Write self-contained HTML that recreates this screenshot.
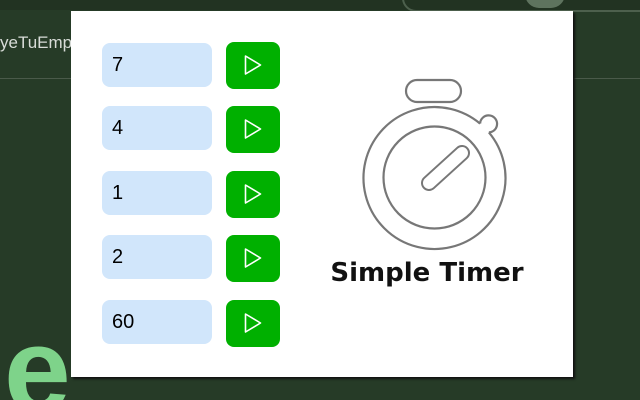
<!DOCTYPE html>
<html style="width:640px;height:400px;overflow:hidden"><head><style>
body{margin:0;width:640px;height:400px;background:#263b27;position:relative;overflow:hidden;font-family:"Liberation Sans",Arial,sans-serif}
.top{position:absolute;left:0;top:0;width:640px;height:10px;background:#223322}
.line{position:absolute;top:78px;height:1px;background:#4a5a4a}
.popup{position:absolute;left:71px;top:11px;width:502px;height:366px;background:#fff;box-shadow:2px 2px 2px #111}
.in{position:absolute;left:31px;width:110px;height:44px;background:#d1e6fb;border-radius:8px;font-size:20px;line-height:44px;padding-left:10px;box-sizing:border-box;color:#000}
.btn{position:absolute;left:155px;width:54px;height:47px;background:#00b000;border-radius:8px}
.btn svg{position:absolute;left:18px;top:12px}
.ewrap{position:absolute;left:0;top:300px;width:71px;height:100px;overflow:hidden}
.e{position:absolute;left:4px;top:10px;font-size:120px;line-height:120px;font-weight:bold;color:#7ed38a;font-family:"Liberation Sans",sans-serif}
.tab{position:absolute;left:402px;top:-20px;width:260px;height:28px;border:2px solid #4d604d;border-radius:14px}
</style></head><body>
<div class="top"></div>
<div class="tab"></div>
<div style="position:absolute;left:525px;top:-20px;width:40px;height:28px;border-radius:20px;background:#5e735e"></div>
<div style="position:absolute;left:0;top:33px;color:#d8dcd8;font-size:17px">yeTuEmp</div>
<div class="line" style="left:0;width:71px"></div>
<div class="line" style="left:573px;width:67px"></div>
<div class="ewrap"><div class="e">e</div></div>
<div class="popup">
<div class="in" style="top:32px">7</div><div class="btn" style="top:31px"><svg width="20" height="22"><path d="M1.5 2 L16.5 11 L1.5 20 Z" fill="none" stroke="#fff" stroke-width="1.6" stroke-linejoin="round"/></svg></div>
<div class="in" style="top:95px">4</div><div class="btn" style="top:95px"><svg width="20" height="22"><path d="M1.5 2 L16.5 11 L1.5 20 Z" fill="none" stroke="#fff" stroke-width="1.6" stroke-linejoin="round"/></svg></div>
<div class="in" style="top:160px">1</div><div class="btn" style="top:160px"><svg width="20" height="22"><path d="M1.5 2 L16.5 11 L1.5 20 Z" fill="none" stroke="#fff" stroke-width="1.6" stroke-linejoin="round"/></svg></div>
<div class="in" style="top:224px">2</div><div class="btn" style="top:224px"><svg width="20" height="22"><path d="M1.5 2 L16.5 11 L1.5 20 Z" fill="none" stroke="#fff" stroke-width="1.6" stroke-linejoin="round"/></svg></div>
<div class="in" style="top:289px">60</div><div class="btn" style="top:289px"><svg width="20" height="22"><path d="M1.5 2 L16.5 11 L1.5 20 Z" fill="none" stroke="#fff" stroke-width="1.6" stroke-linejoin="round"/></svg></div>
<svg style="position:absolute;left:0;top:0" width="502" height="366">
<g fill="none" stroke="#777" stroke-width="2.2">
<rect x="335" y="69" width="55" height="22" rx="11"/>
<path d="M409.1 112.6 A71 71 0 1 0 417.9 121.4"/>
<path d="M409.1 112.6 A8.5 8.5 0 1 1 417.9 121.4"/>
<circle cx="363.5" cy="166.5" r="51"/>
<path d="M358 172 L391 142" stroke-width="16" stroke-linecap="round"/>
</g>
<path d="M358 172 L391 142" fill="none" stroke="#fff" stroke-width="12" stroke-linecap="round"/>
<text x="356" y="270" text-anchor="middle" font-size="26" font-weight="bold" font-family="'DejaVu Sans','Liberation Sans',sans-serif" fill="#111">Simple Timer</text>
</svg>
</div>
</body></html>
